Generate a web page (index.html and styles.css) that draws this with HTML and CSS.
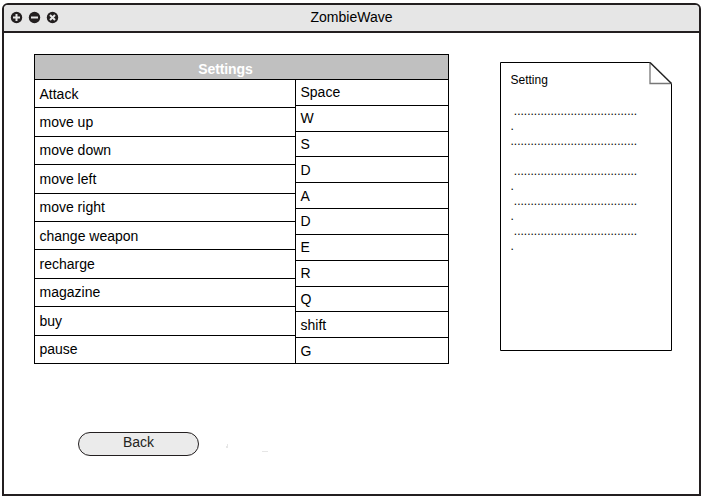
FILE: index.html
```
<!DOCTYPE html>
<html lang="en">
<head>
<meta charset="utf-8">
<title>ZombieWave</title>
<link rel="stylesheet" href="styles.css">
</head>
<body>
<div class="window">
  <header class="titlebar">
    <svg class="controls" width="50" height="14" viewBox="0 0 50 14">
      <g fill="#231f20"><circle cx="6.500" cy="7.500" r="5.700"/><circle cx="24.500" cy="7.500" r="5.700"/><circle cx="42.500" cy="7.500" r="5.700"/></g>
      <g stroke="#e6e6e6" stroke-width="2" fill="none">
        <path d="M3 7.500h7M6.500 4v7"/><path d="M21 7.500h7"/><path d="M40 5l5 5M45 5l-5 5"/>
      </g>
    </svg>
    <h1 class="title">ZombieWave</h1>
  </header>
  <main class="content">
    <div class="left">
      <section class="settings">
        <h2 class="settings-head"><span>Settings</span></h2>
        <div class="columns">
          <div class="col actions">
            <div>Attack</div><div>move up</div><div>move down</div><div>move left</div><div>move right</div>
            <div>change weapon</div><div>recharge</div><div>magazine</div><div>buy</div><div>pause</div>
          </div>
          <div class="col keys">
            <div>Space</div><div>W</div><div>S</div><div>D</div><div>A</div><div>D</div>
            <div>E</div><div>R</div><div>Q</div><div>shift</div><div>G</div>
          </div>
        </div>
      </section>
      <div class="footer">
        <button class="back">Back</button>
        <svg class="specks" width="42" height="10" viewBox="0 0 42 10"><path d="M1 0h1v4h-2v-2h1zM36 7h6v1h-6z" fill="#e6e6e6"/></svg>
      </div>
    </div>
    <aside class="note">
      <svg class="paper" width="172" height="289" viewBox="0 0 172 289" fill="none">
        <path d="M150 .5H.5v288h171V21.5" stroke="#000"/>
        <path d="M150 .5v21h21.5" stroke="#777" stroke-width="1.3"/>
        <path d="M150 .5L171.5 21.5" stroke="#222" stroke-width="1.5"/>
      </svg>
      <div class="note-text">
        <p class="note-title">Setting</p>
        <pre class="note-lines"> .....................................
.
......................................

 .....................................
.
 .....................................
.
 .....................................
.</pre>
      </div>
    </aside>
  </main>
</div>
</body>
</html>
```
FILE: styles.css
```
* { box-sizing: border-box; }
body {
  margin: 0;
  padding: 3px 2px 2px;
  height: 498px;
  background: #fff;
  color: #000;
  font: 14px "Liberation Sans", Arial, sans-serif;
}
.window {
  width: 699px;
  height: 493px;
  border: 2px solid #231f20;
  border-radius: 6px 6px 0 0;
  overflow: hidden;
}
.titlebar {
  display: grid;
  grid-template-columns: 1fr auto 1fr;
  height: 28px;
  background: #e6e6e6;
  border-bottom: 2px solid #231f20;
}
.controls { margin: 5px 0 0 6px; }
.title {
  margin: 4px 0 0;
  font-size: 14px;
  font-weight: normal;
  line-height: 16px;
}
.content { display: flex; gap: 51px; padding: 21px 0 0 30px; }
.left { width: 415px; }
.settings {
  height: 310px;
  border: 1px solid #000;
  border-bottom: 0;
}
.settings-head {
  height: 25px;
  margin: 0;
  padding: 6px 32px 0 0;
  background: #c0c0c0;
  border-bottom: 1px solid #000;
  color: #fff;
  font-size: 14px;
  letter-spacing: -0.1px;
  line-height: 17px;
  text-align: center;
}
.columns { display: grid; grid-template-columns: 260px 1fr; height: 284px; }
.col { display: grid; grid-auto-rows: 1fr; }
.col > div {
  display: flex;
  align-items: center;
  min-height: 0;
  padding-left: 4.5px;
  line-height: 16px;
  border-bottom: 1px solid #000;
}
.keys { border-left: 1px solid #000; }
.footer { display: flex; padding: 68px 0 0 44px; }
.back {
  width: 121px;
  height: 24px;
  padding: 0 0 4px;
  border: 1px solid #231f20;
  border-radius: 12px;
  background: #ebebeb;
  color: #231f20;
  font: inherit;
  line-height: 16px;
}
.specks { margin: 12px 0 0 27px; }
.note {
  display: grid;
  width: 172px;
  height: 289px;
  margin-top: 8px;
}
.paper, .note-text { grid-area: 1 / 1; }
.note-text { padding: 11px 0 0 10.5px; font-size: 12px; line-height: 15px; }
.note-title { margin: 0 0 16px; }
.note-lines { margin: 0; font: inherit; }
```
